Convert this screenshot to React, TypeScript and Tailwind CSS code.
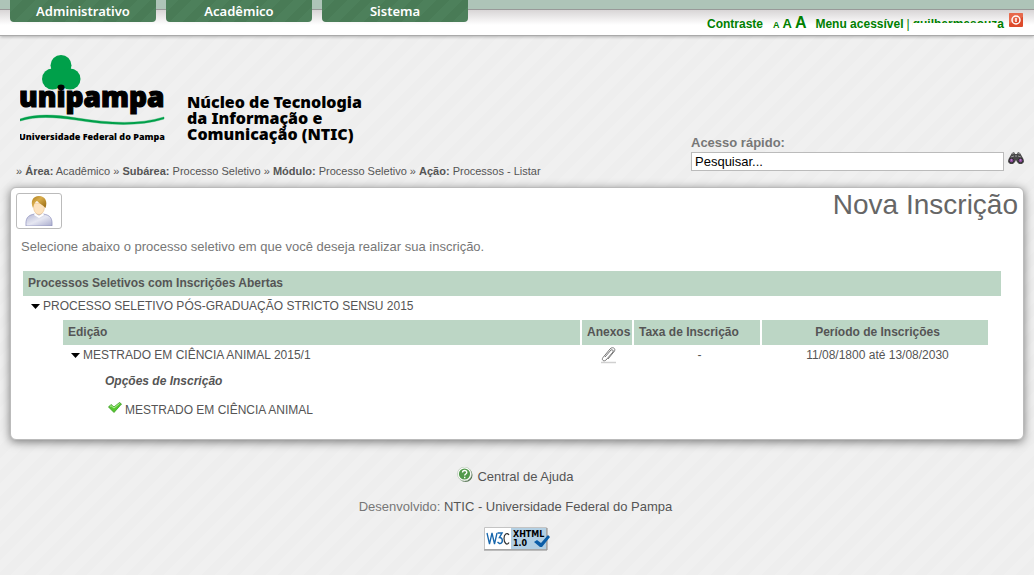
import { useState } from "react";

const menus = ["Administrativo", "Acadêmico", "Sistema"];

const trail = [
  { label: "Área:", value: "Acadêmico" },
  { label: "Subárea:", value: "Processo Seletivo" },
  { label: "Módulo:", value: "Processo Seletivo" },
  { label: "Ação:", value: "Processos - Listar" },
];

function Logo() {
  return (
    <svg width="146" height="90" viewBox="0 0 146 90" role="img" aria-label="unipampa">
      <g fill="#00a04a">
        <circle cx="41" cy="11.500" r="10.500" />
        <circle cx="32.500" cy="25" r="10.500" />
        <circle cx="50" cy="25" r="10.500" />
        <path d="M34 17h14v17H34z" />
      </g>
      <text x="-1" y="53" fontFamily="'Noto Sans', 'Open Sans', sans-serif" fontWeight="900" fontSize="28" stroke="#000" strokeWidth="1.2">
        unipampa
      </text>
      <path d="M0 65c14-5 34-5 57-1 32 5 61 7 87-1v2c-26 8-57 6-88 1-22-3-40-4-56 1z" fill="#00a04a" stroke="#00a04a" strokeWidth=".4" />
      <text x="-1" y="86" fontFamily="'Noto Sans', 'Open Sans', sans-serif" fontWeight="900" fontSize="9">
        Universidade Federal do Pampa
      </text>
    </svg>
  );
}

function PowerIcon() {
  return (
    <svg width="14" height="14" viewBox="0 0 14 14" fill="none">
      <rect width="14" height="14" rx="1" fill="#dd4a2b" />
      <path d="M0 0h14v4L0 11z" fill="#ef7e62" opacity=".6" />
      <circle cx="7" cy="7" r="4" stroke="#fff" strokeWidth="1.5" />
      <path d="M7 5v4" stroke="#fff" strokeWidth="1.5" />
    </svg>
  );
}

function BinocularsIcon() {
  return (
    <svg width="16" height="13" viewBox="0 0 16 13">
      <path d="M4 1l2-1 1 2h2l1-2 2 1 3.500 6 .5 3-2 2h-3L9 10 8 8 7 10l-2 2H2l-2-2 .5-3z" fill="#484848" />
      <path d="M4 2l2-1M10 1l2 1M7 4h2M3 5l3-1M10 4l3 1" stroke="#9a9a9a" />
      <circle cx="3.500" cy="8.500" r="2.300" fill="#8a4a99" stroke="#333" />
      <circle cx="12.500" cy="8.500" r="2.300" fill="#8a4a99" stroke="#333" />
      <path d="M3 8h1M12 8h1" stroke="#d8a8e4" />
    </svg>
  );
}

function PersonIcon() {
  return (
    <svg width="28" height="30" viewBox="0 0 28 30">
      <defs>
        <linearGradient id="shirt" x1="0" y1="0" x2="1" y2="1">
          <stop offset="0" stopColor="#b4b7d4" />
          <stop offset=".5" stopColor="#e6e7f2" />
          <stop offset="1" stopColor="#a9accd" />
        </linearGradient>
        <linearGradient id="hair" x1="0" y1="0" x2="1" y2="1">
          <stop offset="0" stopColor="#a87a18" />
          <stop offset=".4" stopColor="#d9ac4c" />
          <stop offset="1" stopColor="#94660c" />
        </linearGradient>
      </defs>
      <path d="M1 30c-.5-7 1-11 9-12h8c8 1 9.500 5 9 12z" fill="url(#shirt)" stroke="#8e91bd" strokeWidth=".7" />
      <path d="M10 17l4 3 4-3 1 2-5 3-5-3z" fill="#fff" />
      <path d="M8 7h12l-1 7c-1 3-3 4.500-5 4.500S10 17 9 14z" fill="#fde3bf" stroke="#e6b679" strokeWidth=".5" />
      <path d="M8 12C5 5 8 0 14 0s9 5 6.500 12l-1-1C18 9 15 8 12 5c-2 1-3 3-4 7z" fill="url(#hair)" />
    </svg>
  );
}

function ClipIcon() {
  return (
    <svg width="16" height="17" viewBox="0 0 16 17" fill="none">
      <path d="M0 15.500h15" stroke="#d0d0d0" strokeWidth="1.500" />
      <path d="M4 10l6-7c1-1 3 .5 2 2l-7 8c-2 2-5 0-3-2.500L9 2c2-2.500 6-1 4.500 2L7 12" stroke="#777" strokeWidth="1" />
    </svg>
  );
}

function CheckIcon() {
  return (
    <svg width="14" height="11" viewBox="0 0 14 11" className="mb-[6px]">
      <path d="M.5 5L3 2.500 6 5l5.500-4.500L13.500 2 6 10.500z" fill="#55c72f" stroke="#3d9b24" strokeWidth=".8" />
      <path d="M2 4.500l1-.8L6 6l5.500-4.500" fill="none" stroke="#b5f09b" />
    </svg>
  );
}

function HelpIcon() {
  return (
    <svg width="16" height="16" viewBox="0 1 16 16">
      <circle cx="8.500" cy="9" r="7" fill="#577455" />
      <circle cx="7.500" cy="8" r="7" fill="#fff" stroke="#b4c4b2" strokeWidth=".7" />
      <circle cx="7.500" cy="8" r="5.600" fill="#529a4c" />
      <path d="M5.500 6.500c0-3 4.500-2.500 4.300 0C9.700 8 7.700 8 7.700 9.500M7.700 10.800v1.400" fill="none" stroke="#fff" strokeWidth="1.400" />
    </svg>
  );
}

function XhtmlBadge() {
  return (
    <svg width="66" height="24" viewBox="0 0 66 24" role="img" aria-label="W3C XHTML 1.0">
      <path d="M.5.500h62v22H.5z" fill="#fff" stroke="#c4c4c4" />
      <path d="M27 1h35v21H27z" fill="#b2cfe3" />
      <path d="M0 23h63V1" fill="none" stroke="#888" />
      <path d="M3 6l2.500 11L8 6l2.500 11L13 6" fill="none" stroke="#1767ad" strokeWidth="1.300" />
      <path d="M13.500 6H18l-2.500 4.500c4 0 3.500 6.500 0 6l-2-1.500" fill="none" stroke="#1767ad" strokeWidth="1.500" />
      <path d="M25 8c-2-3-5-1-5 3.500s3 7.500 5 4" fill="none" stroke="#333" strokeWidth="1.200" />
      <text x="29" y="10" fontFamily="'DejaVu Sans', sans-serif" fontWeight="700" fontSize="8">XHTML</text>
      <text x="29" y="19" fontFamily="'DejaVu Sans', sans-serif" fontWeight="700" fontSize="8">1.0</text>
      <path d="M50 15l3-2 4 3 7-8 2 2-8 10h-2z" fill="#0b5da7" />
    </svg>
  );
}

function Arrow() {
  return (
    <svg width="9" height="5" viewBox="0 0 9 5" className="shrink-0">
      <path d="M0 0h9L4.500 5z" />
    </svg>
  );
}

export default function App() {
  const [query, setQuery] = useState("Pesquisar...");
  const [openProcess, setOpenProcess] = useState(true);
  const [openEdition, setOpenEdition] = useState(true);

  return (
    <div className="min-h-screen bg-[repeating-linear-gradient(135deg,#f0f0f0_0,#f0f0f0_9px,#eeeeee_9px,#eeeeee_18px)] font-['Liberation_Sans',Arial,sans-serif] text-xs text-[#555]">
      <header className="flex h-9 items-start justify-between border-b border-[#aaa] bg-[linear-gradient(to_bottom,#aec4b8_0,#aec4b8_9px,#999_9px,#999_10px,#d8d5d6_10px,#fff_25px)] pr-[11px] pl-[10px] shadow-[0_1px_3px_rgba(0,0,0,0.25)]">
        <nav className="flex gap-[10px]">
          {menus.map((menu) => (
            <button
              key={menu}
              className="h-[22px] w-[146px] rounded-b bg-[repeating-linear-gradient(135deg,#4d805b_0,#4d805b_9px,#497b56_9px,#497b56_18px)] pt-px font-['Noto_Sans',sans-serif] text-[13px] font-semibold text-white"
            >
              {menu}
            </button>
          ))}
        </nav>
        <div className="flex items-baseline pt-[11px] font-bold text-[#008000]">
          <a href="#contraste">Contraste</a>
          <span className="ml-[10px] flex items-baseline gap-[3px]">
            <button className="text-[9px]" aria-label="Fonte pequena">A</button>
            <button className="text-[13px]" aria-label="Fonte normal">A</button>
            <button className="text-base" aria-label="Fonte grande">A</button>
          </span>
          <a href="#menu" className="ml-[9px]">Menu acessível</a>
          <span className="mx-[3px] font-normal">|</span>
          <span className="relative">
            guilhermesouza
            <span className="absolute top-[7px] right-[7px] bottom-0 left-0 bg-white" />
          </span>
          <button aria-label="Sair" className="mt-[2px] ml-[5px] self-start">
            <PowerIcon />
          </button>
        </div>
      </header>

      <div className="flex items-end justify-between pr-[10px] pl-4">
        <div>
          <div className="flex items-start pt-[18px] pl-1">
            <Logo />
            <p className="ml-[21px] pt-10 font-['Noto_Sans','Open_Sans',sans-serif] text-base leading-4 font-black text-black">
              Núcleo de Tecnologia
              <br />
              da Informação e
              <br />
              Comunicação (NTIC)
            </p>
          </div>
          <p className="mt-[19px] mb-2 text-[11px] leading-4">
            {trail.map((step) => (
              <span key={step.label}>
                » <b>{step.label}</b> {step.value}{" "}
              </span>
            ))}
          </p>
        </div>
        <form className="mb-4 w-[333px]" onSubmit={(e) => e.preventDefault()}>
          <label htmlFor="busca" className="block text-[13px] leading-[18px] font-bold text-[#777]">
            Acesso rápido:
          </label>
          <div className="flex items-start gap-1">
            <input
              id="busca"
              value={query}
              onChange={(e) => setQuery(e.target.value)}
              className="h-[19px] min-w-0 flex-1 border border-[#bbb] bg-white px-[3px] text-[13px] text-black"
            />
            <button aria-label="Buscar">
              <BinocularsIcon />
            </button>
          </div>
        </form>
      </div>

      <main className="mx-[10px] rounded-md border border-[#bbb] bg-white px-[5px] pt-[5px] pb-[19px] shadow-[0_2px_10px_rgba(0,0,0,0.5)]">
        <div className="flex items-start justify-between">
          <div className="flex h-9 w-[46px] items-center justify-center rounded-[3px] border border-[#bbb]">
            <PersonIcon />
          </div>
          <h1 className="text-[28px] leading-6 text-[#666]">Nova Inscrição</h1>
        </div>
        <p className="mt-2 ml-[5px] text-[13px] leading-5 text-[#777]">
          Selecione abaixo o processo seletivo em que você deseja realizar sua inscrição.
        </p>

        <section className="mt-[14px] mr-[17px] ml-[7px]">
          <h2 className="bg-[#bcd6c5] px-[5px] leading-[25px] font-bold">Processos Seletivos com Inscrições Abertas</h2>
          <button className="flex h-6 items-center gap-[3px] pb-1 pl-2" onClick={() => setOpenProcess(!openProcess)}>
            <Arrow />
            PROCESSO SELETIVO PÓS-GRADUAÇÃO STRICTO SENSU 2015
          </button>
          {openProcess && (
            <div className="mr-[13px] ml-10">
              <table className="-mx-[2px] w-[calc(100%+4px)] border-separate border-spacing-x-[2px] border-spacing-y-0">
                <thead>
                  <tr className="h-[25px] text-left [&>th]:bg-[#bcd6c5] [&>th]:pb-[2px] [&>th]:pl-[5px]">
                    <th>Edição</th>
                    <th className="w-[50px]">Anexos</th>
                    <th className="w-[126px]">Taxa de Inscrição</th>
                    <th className="w-[226px] text-center">Período de Inscrições</th>
                  </tr>
                </thead>
                <tbody>
                  <tr className="h-[22px] text-center [&>td]:pb-[2px]">
                    <td>
                      <button className="flex items-center gap-[3px] pl-2" onClick={() => setOpenEdition(!openEdition)}>
                        <Arrow />
                        MESTRADO EM CIÊNCIA ANIMAL 2015/1
                      </button>
                    </td>
                    <td>
                      <button aria-label="Anexos" className="block pl-[19px]">
                        <ClipIcon />
                      </button>
                    </td>
                    <td className="pl-[5px]">-</td>
                    <td className="pl-[5px]">11/08/1800 até 13/08/2030</td>
                  </tr>
                </tbody>
              </table>
              {openEdition && (
                <div className="pl-[42px]">
                  <h3 className="mt-1 leading-5 font-bold italic">Opções de Inscrição</h3>
                  <a href="#inscricao" className="mt-[9px] flex items-center gap-[3px] pl-[3px] leading-5">
                    <CheckIcon />
                    MESTRADO EM CIÊNCIA ANIMAL
                  </a>
                </div>
              )}
            </div>
          )}
        </section>
      </main>

      <footer className="flex flex-col items-center gap-[10px] pt-[27px] text-[13px] leading-5 text-[#777]">
        <a href="#ajuda" className="flex gap-1 pr-[3px] text-[#555]">
          <HelpIcon />
          Central de Ajuda
        </a>
        <p className="pr-[3px]">
          Desenvolvido: <a href="#ntic" className="text-[#555]">NTIC - Universidade Federal do Pampa</a>
        </p>
        <a href="#xhtml">
          <XhtmlBadge />
        </a>
      </footer>
    </div>
  );
}
